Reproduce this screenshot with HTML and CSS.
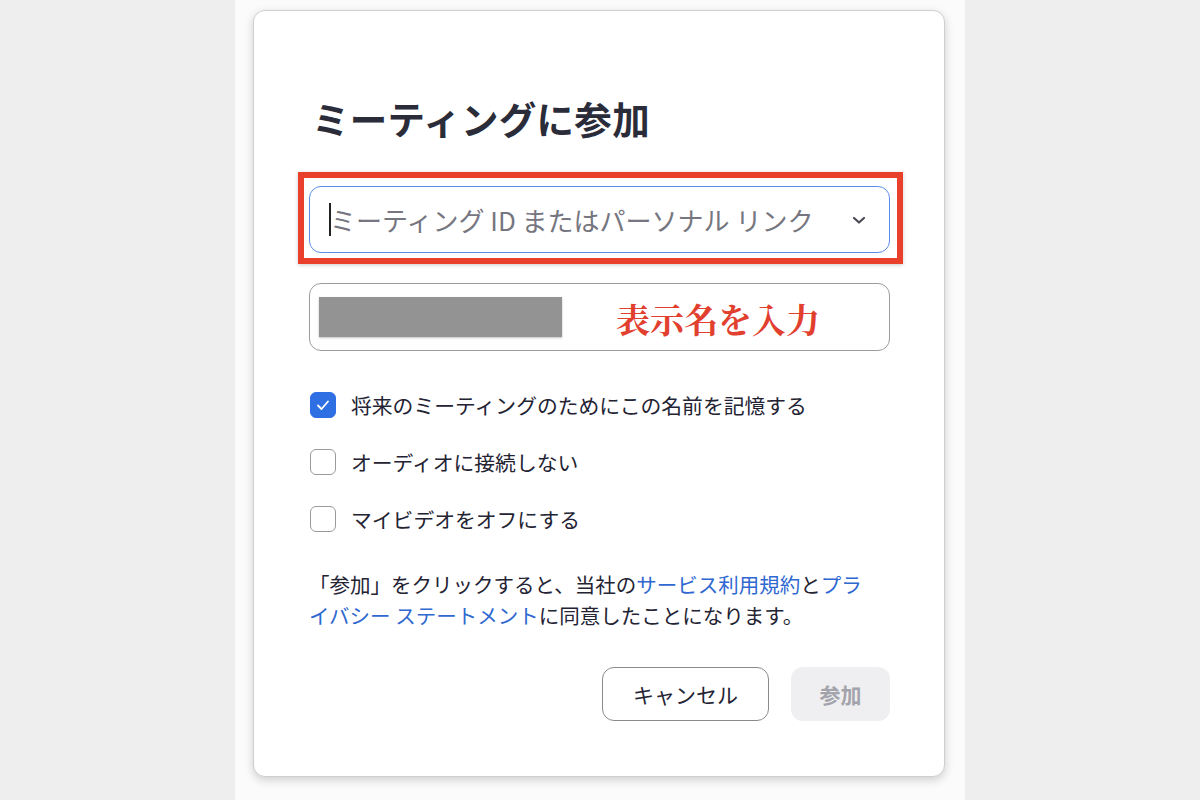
FILE: index.html
```html
<!DOCTYPE html>
<html lang="ja">
<head>
    <meta charset="UTF-8">
    <meta name="viewport" content="width=device-width, initial-scale=1.0">
    <title>ミーティングに参加</title>
    <link rel="stylesheet" href="styles.css">
</head>
<body>

<div class="page">
    <div class="dialog">
        <h1 class="title">ミーティングに参加</h1>

        <div class="highlight">
            <div class="field field-active">
                <span class="caret"></span>
                <span class="placeholder">ミーティング ID またはパーソナル リンク</span>
                <svg class="chevron" width="14" height="9" viewBox="0 0 14 9">
                    <polyline points="2,2 7,6.5 12,2" fill="none" stroke="#4a4a55" stroke-width="2.2" stroke-linecap="round" stroke-linejoin="round"/>
                </svg>
            </div>
        </div>

        <div class="field field-name">
            <div class="masked"></div>
            <span class="hint">表示名を入力</span>
        </div>

        <div class="options">
            <label class="option">
                <span class="box checked">
                    <svg width="16" height="16" viewBox="0 0 16 16">
                        <polyline points="3,8.5 6.5,12 13,4.5" fill="none" stroke="#fff" stroke-width="1.8" stroke-linecap="round" stroke-linejoin="round"/>
                    </svg>
                </span>
                将来のミーティングのためにこの名前を記憶する
            </label>
            <label class="option">
                <span class="box"></span>
                オーディオに接続しない
            </label>
            <label class="option">
                <span class="box"></span>
                マイビデオをオフにする
            </label>
        </div>

        <p class="terms">「参加」をクリックすると、当社の<a href="#">サービス利用規約</a>と<a href="#">プライバシー ステートメント</a>に同意したことになります。</p>

        <div class="actions">
            <button class="button button-cancel">キャンセル</button>
            <button class="button button-join" disabled>参加</button>
        </div>
    </div>
</div>

</body>
</html>
```

FILE: styles.css
```css
body {
    font-family: 'Noto Sans CJK JP', 'Noto Sans', sans-serif;
    margin: 0;
    padding: 0;
    background-color: #eeeeee;
    color: #232333;
}

.page {
    width: 730px;
    height: 800px;
    margin: 0 auto;
    background-color: #fbfbfb;
    padding-top: 10px;
    box-sizing: border-box;
}

.dialog {
    width: 692px;
    height: 767px;
    margin-left: 18px;
    box-sizing: border-box;
    padding: 81px 56px 0 55px;
    background-color: #fff;
    border: 1px solid #cfcfcf;
    border-radius: 12px;
    box-shadow: 0 3px 10px rgba(0, 0, 0, 0.18);
    display: flex;
    flex-direction: column;
}

.title {
    font-size: 37.5px;
    font-weight: bold;
    color: #2b2c3a;
    margin: 0 0 28px 3px;
    line-height: 52px;
    letter-spacing: 0.3px;
}

.highlight {
    margin: 0 -15px 0 -11px;
    padding: 8px 7px 5px 5px;
    border: 6px solid #e8402b;
    box-shadow: 0 1px 4px rgba(0, 0, 0, 0.2);
}

.field {
    height: 67px;
    box-sizing: border-box;
    border-radius: 12px;
    display: flex;
    align-items: center;
    position: relative;
}

.field-active {
    border: 1.5px solid #5a8ee6;
    padding: 0 23px 0 19px;
}

.caret {
    width: 2px;
    height: 33px;
    background-color: #222;
}

.placeholder {
    font-size: 26px;
    color: #767680;
    flex: 1;
    margin-left: -1px;
}

.chevron {
    margin-top: 2px;
}

.field-name {
    margin-top: 19px;
    height: 68px;
    border: 1.5px solid #9c9c9c;
    padding-left: 9px;
    margin-right: -2px;
}

.masked {
    width: 243px;
    height: 40px;
    background-color: #939393;
    box-shadow: 0 1px 2px rgba(0, 0, 0, 0.25);
}

.hint {
    margin-left: 54px;
    font-family: 'Noto Serif CJK JP', 'Noto Sans CJK JP', serif;
    font-size: 34px;
    font-weight: bold;
    color: #e2402e;
    margin-top: 2px;
}

.options {
    margin-top: 41px;
    display: flex;
    flex-direction: column;
    gap: 31px;
}

.option {
    display: flex;
    align-items: center;
    font-size: 20.8px;
    height: 26px;
    color: #232333;
}

.box {
    width: 26px;
    height: 26px;
    box-sizing: border-box;
    border: 1.5px solid #9a9a9a;
    border-radius: 6px;
    margin-right: 15px;
    margin-left: 1px;
    display: flex;
    align-items: center;
    justify-content: center;
}

.box.checked {
    background-color: #2f6fe4;
    border-color: #2f6fe4;
}

.terms {
    margin: 37px 0 0 0;
    font-size: 20.5px;
    line-height: 31px;
    color: #232333;
    max-width: 565px;
}

.terms a {
    color: #2f68d0;
    text-decoration: none;
}

.actions {
    margin-top: 36px;
    margin-right: -2px;
    display: flex;
    justify-content: flex-end;
    gap: 22px;
}

.button {
    height: 54px;
    border-radius: 12px;
    font-family: 'Noto Sans CJK JP', sans-serif;
    font-size: 21px;
    cursor: pointer;
}

.button-cancel {
    width: 167px;
    background-color: #fff;
    border: 1.5px solid #8a8a8a;
    color: #232333;
}

.button-join {
    width: 99px;
    background-color: #efeff1;
    border: none;
    color: #a3a3ab;
    font-weight: bold;
}
```
